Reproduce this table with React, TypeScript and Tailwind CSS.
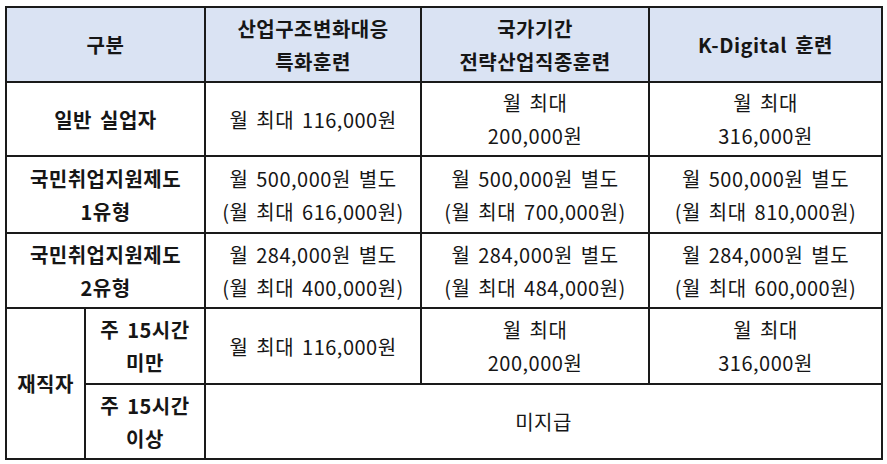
import React from 'react'

const cols = ['w-[79px]', 'w-[120px]', 'w-[216px]', 'w-[228px]', 'w-[233px]']

function Lines({ lines }: { lines: string[] }) {
  return (
    <>
      {lines.map((l, i) => (
        <div key={i}>{l}</div>
      ))}
    </>
  )
}

const rows: { label: string[]; cells: string[][]; h: string }[] = [
  {
    label: ['일반 실업자'],
    cells: [['월 최대 116,000원'], ['월 최대', '200,000원'], ['월 최대', '316,000원']],
    h: 'h-[74px]',
  },
  {
    label: ['국민취업지원제도', '1유형'],
    cells: [
      ['월 500,000원 별도', '(월 최대 616,000원)'],
      ['월 500,000원 별도', '(월 최대 700,000원)'],
      ['월 500,000원 별도', '(월 최대 810,000원)'],
    ],
    h: 'h-[77px]',
  },
  {
    label: ['국민취업지원제도', '2유형'],
    cells: [
      ['월 284,000원 별도', '(월 최대 400,000원)'],
      ['월 284,000원 별도', '(월 최대 484,000원)'],
      ['월 284,000원 별도', '(월 최대 600,000원)'],
    ],
    h: 'h-[75px]',
  },
]

export default function App() {
  const td = 'border-2 border-[#1a1a1a] text-center align-middle p-0'
  return (
    <div className="w-[887px] h-[464px] bg-white pt-[6px] pl-[5px] font-['Noto_Sans_CJK_KR',sans-serif] text-[20px] leading-[33px] text-[#161616] tracking-[0.5px] [word-spacing:3px]">
      <table className="border-collapse table-fixed w-[877px]">
        <colgroup>
          {cols.map((c, i) => (
            <col key={i} className={c} />
          ))}
        </colgroup>
        <thead>
          <tr className="h-[75px] bg-[#dae3f3] font-bold">
            <th colSpan={2} className={td}>구분</th>
            <th className={td}>
              <Lines lines={['산업구조변화대응', '특화훈련']} />
            </th>
            <th className={td}>
              <Lines lines={['국가기간', '전략산업직종훈련']} />
            </th>
            <th className={td}>K-Digital 훈련</th>
          </tr>
        </thead>
        <tbody>
          {rows.map((r, i) => (
            <tr key={i} className={r.h}>
              <td colSpan={2} className={`${td} font-bold`}>
                <Lines lines={r.label} />
              </td>
              {r.cells.map((c, j) => (
                <td key={j} className={td}>
                  <Lines lines={c} />
                </td>
              ))}
            </tr>
          ))}
          <tr className="h-[76px]">
            <td rowSpan={2} className={`${td} font-bold`}>재직자</td>
            <td className={`${td} font-bold`}>
              <Lines lines={['주 15시간', '미만']} />
            </td>
            <td className={td}>월 최대 116,000원</td>
            <td className={td}>
              <Lines lines={['월 최대', '200,000원']} />
            </td>
            <td className={td}>
              <Lines lines={['월 최대', '316,000원']} />
            </td>
          </tr>
          <tr className="h-[75px]">
            <td className={`${td} font-bold`}>
              <Lines lines={['주 15시간', '이상']} />
            </td>
            <td colSpan={3} className={td}>미지급</td>
          </tr>
        </tbody>
      </table>
    </div>
  )
}
